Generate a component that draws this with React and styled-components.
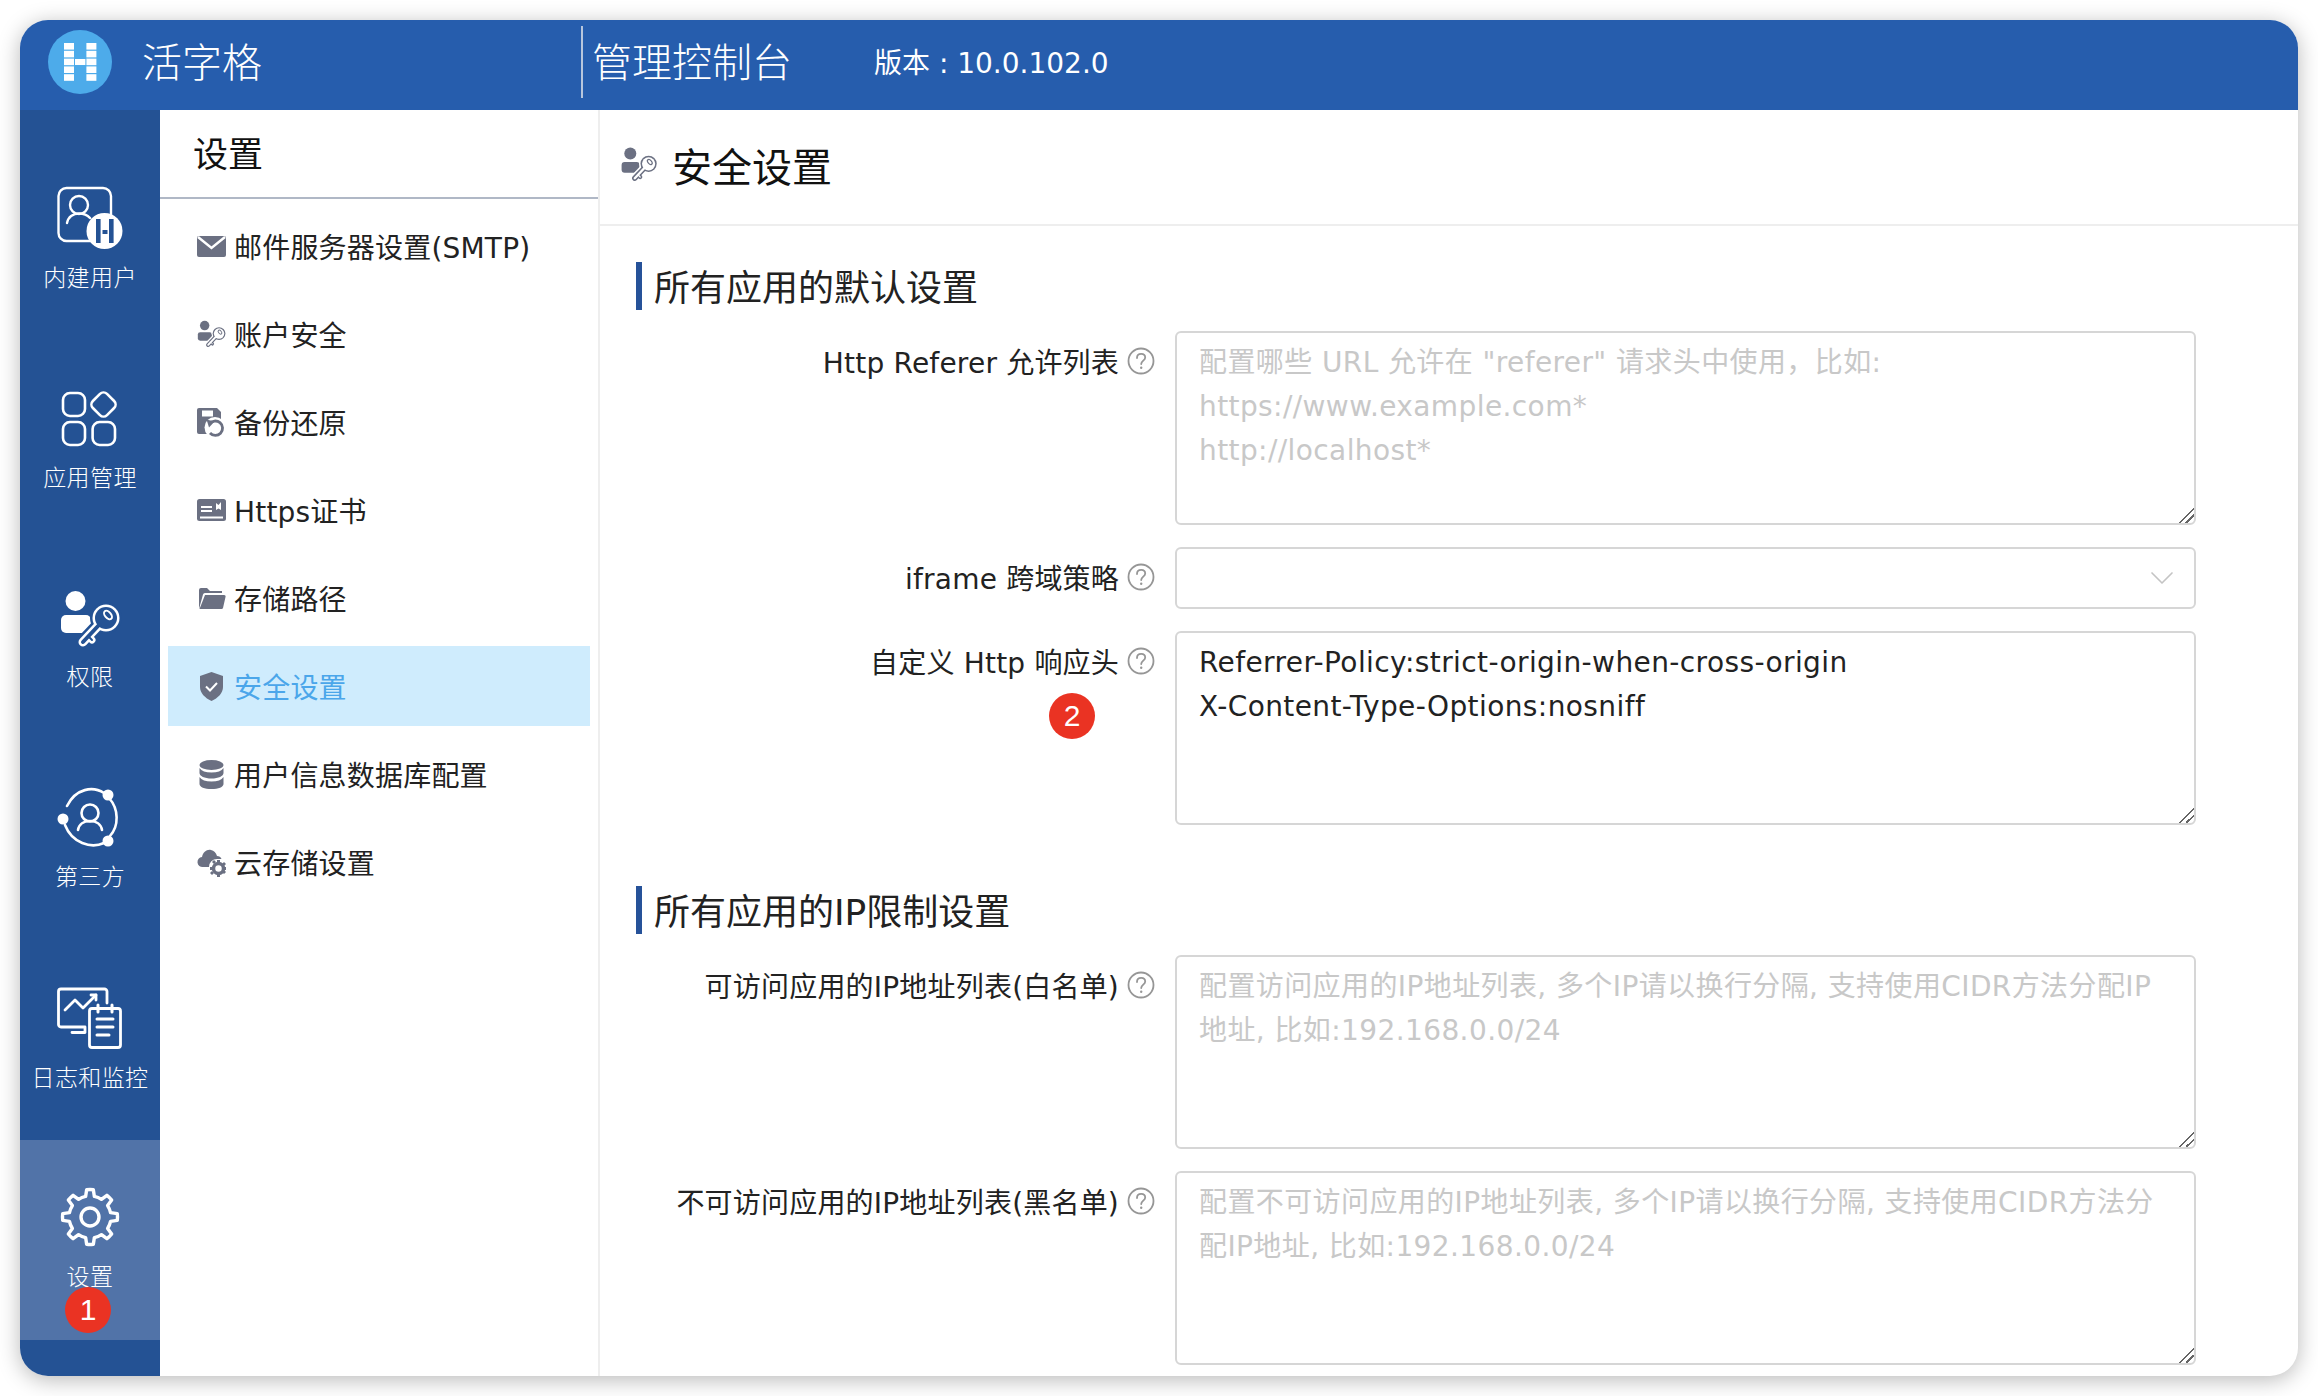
import React from 'react';
import styled, { createGlobalStyle } from 'styled-components';
import { ChevronDown } from 'lucide-react';

const FONT = '"DejaVu Sans", "Noto Sans CJK SC", sans-serif';

const GlobalStyle = createGlobalStyle`
  * { box-sizing: border-box; }
  html, body { margin: 0; padding: 0; background: #fff; }
  body {
    width: 2318px;
    height: 1396px;
    overflow: hidden;
    font-family: ${FONT};
  }
`;

const Page = styled.div`
  width: 2318px;
  height: 1396px;
  padding: 20px;
`;
const Frame = styled.div`
  height: 1356px;
  border-radius: 28px;
  overflow: hidden;
  background: #fff;
  box-shadow: 0 4px 22px rgba(0, 0, 0, .28);
  display: flex;
  flex-direction: column;
`;
const TopBar = styled.header`
  flex: 0 0 90px;
  background: #265dad;
  color: #fff;
  display: flex;
  align-items: center;
  padding: 0 0 6px 28px;
`;
const AppName = styled.div`
  font-size: 40px;
  margin-left: 30px;
  padding-bottom: 4px;
  width: 439px;
  font-weight: 300;
`;
const TopDivider = styled.div`
  width: 2px;
  height: 72px;
  background: #b7c6dd;
`;
const ConsoleName = styled.div`
  font-size: 40px;
  margin-left: 9px;
  padding-bottom: 4px;
  font-weight: 300;
`;
const Version = styled.div`
  font-size: 28px;
  margin-left: 82px;
  padding-bottom: 2px;
`;
const Body = styled.div`
  flex: 1;
  display: flex;
  min-height: 0;
`;
const Rail = styled.nav`
  flex: 0 0 140px;
  background: #245294;
  padding-top: 30px;
`;
const RailItem = styled.div`
  position: relative;
  height: 200px;
  background: ${(p) => (p.$active ? '#5173a8' : 'transparent')};
  color: #fff;
  display: flex;
  flex-direction: column;
  align-items: center;
  padding-top: ${(p) => p.$top}px;
`;
const RailLabel = styled.div`
  font-size: 23px;
  line-height: 30px;
  margin-top: ${(p) => p.$gap}px;
  white-space: nowrap;
  font-weight: 300;
  letter-spacing: .4px;
`;
const Badge = styled.div`
  position: absolute;
  width: 46px;
  height: 46px;
  border-radius: 50%;
  background: #ea3323;
  color: #fff;
  font: 30px "Liberation Sans", sans-serif;
  display: flex;
  align-items: center;
  justify-content: center;
  left: ${(p) => p.$left}px;
  top: ${(p) => p.$top}px;
`;
const Side = styled.aside`
  flex: 0 0 440px;
  border-right: 2px solid #eeeeee;
`;
const SideTitle = styled.div`
  height: 89px;
  border-bottom: 2px solid #b0b8c6;
  padding: 0 0 4px 33px;
  display: flex;
  align-items: center;
  font-size: 35px;
  color: #111;
`;
const SideList = styled.div`
  padding: 7px 8px 0;
  display: flex;
  flex-direction: column;
  gap: 8px;
`;
const SideItem = styled.div`
  height: 80px;
  display: flex;
  align-items: center;
  padding-left: 29px;
  gap: 8px;
  font-size: 28px;
  letter-spacing: .2px;
  color: ${(p) => (p.$active ? '#4ba6ea' : '#222')};
  background: ${(p) => (p.$active ? '#cfecfd' : 'transparent')};
  svg { flex: 0 0 auto; color: #6b7082; }
`;
const Main = styled.main`
  flex: 1;
  min-width: 0;
`;
const MainHead = styled.div`
  height: 116px;
  border-bottom: 2px solid #eeeeee;
  display: flex;
  align-items: center;
  padding: 0 0 4px 18px;
  gap: 12px;
  font-size: 40px;
  color: #111;
`;
const Content = styled.div`
  padding: 36px 102px 0 36px;
`;
const SectionTitle = styled.h2`
  margin: ${(p) => p.$top}px 0 21px;
  height: 48px;
  border-left: 6px solid #265299;
  padding: 0 0 2px 12px;
  display: flex;
  align-items: center;
  font-size: 36px;
  font-weight: 400;
  color: #222;
`;
const Row = styled.div`
  display: grid;
  grid-template-columns: 519px 1fr;
  column-gap: 20px;
  margin-bottom: 22px;
  position: relative;
`;
const Label = styled.div`
  display: flex;
  justify-content: flex-end;
  align-items: center;
  height: 44px;
  margin-top: 8px;
  gap: 8px;
  font-size: 28px;
  letter-spacing: .2px;
  color: #222;
  white-space: nowrap;
  svg { flex: 0 0 28px; }
`;
const Area = styled.textarea`
  display: block;
  width: 100%;
  height: 194px;
  border: 2px solid #d6d6d6;
  border-radius: 6px;
  padding: 8px 22px;
  font: 28px/44px ${FONT};
  letter-spacing: .4px;
  color: #222;
  background: #fff;
  outline: none;
  overflow: hidden;
  resize: vertical;
  white-space: pre;
  &::placeholder { color: #c8c8c8; opacity: 1; }
  &::-webkit-resizer {
    background: linear-gradient(135deg, transparent 0 47%, #666 47% 55%, transparent 55% 70%, #666 70% 78%, transparent 78%);
  }
`;
const Select = styled.div`
  height: 62px;
  border: 2px solid #d6d6d6;
  border-radius: 6px;
  display: flex;
  align-items: center;
  justify-content: flex-end;
  padding-right: 12px;
  color: #c4c4c4;
`;
const SideKey = styled(KeyPersonIcon)`
  margin: 0 -2px;
`;

function HelpIcon() {
  return (
    <svg width="28" height="28" viewBox="0 0 28 28" fill="none">
      <circle cx="14" cy="14" r="12.500" stroke="#969696" strokeWidth="1.800" />
      <path d="M10 11c0-2.500 1.800-4.200 4.200-4.200s4 1.600 4 3.700c0 3-4 3.300-4 6.500" stroke="#969696" strokeWidth="1.800" strokeLinecap="round" />
      <circle cx="14.200" cy="20.800" r="1.200" fill="#969696" />
    </svg>
  );
}

function Logo() {
  const rows = [13, 20.8, 28.6, 36.4, 44.2];
  return (
    <svg width="64" height="64" viewBox="0 0 64 64">
      <circle cx="32" cy="32" r="32" fill="#4dabea" />
      {rows.map((y) => (
        <g key={y} fill="#fff">
          <rect x="16" y={y} width="10" height="6.6" />
          <rect x="38.4" y={y} width="10" height="6.6" />
        </g>
      ))}
      <rect x="27" y="29" width="10.4" height="6" fill="#fff" />
    </svg>
  );
}

function UserBadgeIcon() {
  return (
    <svg width="70" height="70" viewBox="0 0 70 70" fill="none" stroke="#fff" strokeWidth="2.400">
      <rect x="3.500" y="6" width="52.500" height="53" rx="8" />
      <circle cx="24" cy="23" r="9" />
      <path d="M12 41c1-6 6-9.500 12-9.500 4 0 8 1.200 11 4.500" strokeLinecap="round" />
      <circle cx="49.500" cy="49" r="18" fill="#fff" stroke="none" />
      <g fill="#245294" stroke="none">
        <rect x="41" y="37" width="4.600" height="24" />
        <rect x="54" y="37" width="4.600" height="24" />
        <rect x="47.500" y="48" width="5" height="4" />
      </g>
    </svg>
  );
}

function AppsIcon() {
  return (
    <svg width="70" height="70" viewBox="0 0 70 70" fill="none" stroke="#fff" strokeWidth="2.600">
      <rect x="8" y="8" width="22" height="23" rx="7" />
      <rect x="38.500" y="9.500" width="20" height="20" rx="5" transform="rotate(45 48.500 19.500)" />
      <rect x="8" y="37" width="22" height="23" rx="7" />
      <rect x="37.600" y="37" width="22.400" height="23" rx="7" />
    </svg>
  );
}

// the key is stroked three times: gap, outline, then the hollow inside
function KeyPersonIcon({ size = 70, color = '#fff', fill = '#245294', className }) {
  const layers = [[fill, 5], [color, 2.500], [fill, 0]];
  return (
    <svg className={className} width={size} height={size} viewBox="0 0 70 70" fill="none" strokeLinecap="round">
      <circle cx="20.500" cy="16" r="10" fill={color} />
      <rect x="6" y="30" width="30" height="18" rx="5" fill={color} />
      {layers.map(([c, extra]) => (
        <g key={`${c}${extra}`} stroke={c} fill={c}>
          <circle cx="51" cy="33" r={11 + extra} strokeWidth="0" />
          <path d="M44 40L28 57" strokeWidth={4 + extra * 2} />
          <path d="M33 51l4 4" strokeWidth={2 + extra * 2} />
        </g>
      ))}
      <ellipse cx="53" cy="30" rx="3" ry="5" transform="rotate(-40 53 30)" stroke={color} strokeWidth="2" />
    </svg>
  );
}

function ThirdPartyIcon() {
  return (
    <svg width="70" height="70" viewBox="0 0 70 70" fill="none" stroke="#fff" strokeWidth="2.600" strokeLinecap="round">
      <path d="M49 11C38 4 21 6 12 24" />
      <path d="M54 16c10 11 10 28 1 38" />
      <path d="M49 61C36 67 17 61 10 43" />
      <g fill="#fff" stroke="none">
        <circle cx="53" cy="13" r="5.500" />
        <circle cx="8" cy="37" r="5.500" />
        <circle cx="53" cy="59" r="5.500" />
      </g>
      <circle cx="35" cy="31" r="8.500" />
      <path d="M23 48c1-6 6-9 12-9s11 3 12 9" />
    </svg>
  );
}

function LogsIcon() {
  return (
    <svg width="70" height="70" viewBox="0 0 70 70" fill="none" stroke="#fff" strokeWidth="2.800" strokeLinecap="round" strokeLinejoin="round">
      <path d="M52 18V6.500a2.500 2.500 0 0 0-2.500-2.500H6a2.500 2.500 0 0 0-2.500 2.500v33A2.500 2.500 0 0 0 6 42h24v5.500H17" />
      <path d="M10 25l10-10 8 8 13-13" />
      <path d="M41 10h-5M41 10v5" />
      <rect x="34.500" y="23.500" width="31" height="39" rx="2.500" />
      <path d="M43 20v7M57 20v7M42 34h16M42 42h16M42 50h12" strokeWidth="3" />
    </svg>
  );
}

const gearPath = (() => {
  const c = 35;
  const inner = 21;
  const outer = 27.500;
  const pt = (r, deg) => {
    const a = (deg * Math.PI) / 180;
    return `${(c + r * Math.cos(a)).toFixed(2)} ${(c + r * Math.sin(a)).toFixed(2)}`;
  };
  let d = '';
  for (let i = 0; i < 8; i += 1) {
    const a = i * 45 - 90;
    d += `${i === 0 ? 'M' : `A${inner} ${inner} 0 0 1 `}${pt(inner, a - 12)}`;
    d += `L${pt(outer, a - 7)}A${outer} ${outer} 0 0 1 ${pt(outer, a + 7)}L${pt(inner, a + 12)}`;
  }
  return `${d}A${inner} ${inner} 0 0 1 ${pt(inner, -102)}Z`;
})();

function GearIcon() {
  return (
    <svg width="70" height="70" viewBox="0 0 70 70" fill="none" stroke="#fff" strokeWidth="3.400" strokeLinejoin="round">
      <path d={gearPath} />
      <circle cx="35" cy="35" r="9" />
    </svg>
  );
}

function MailIcon() {
  return (
    <svg width="29" height="29" viewBox="0 0 29 29">
      <rect y="4" width="29" height="21" rx="2" fill="currentColor" />
      <path d="M1 5l13.500 11L28 5" fill="none" stroke="#fff" strokeWidth="2.400" />
    </svg>
  );
}

function BackupIcon() {
  return (
    <svg width="29" height="29" viewBox="0 0 29 29" fill="currentColor">
      <path d="M2 0h18l4 4v20a2 2 0 0 1-2 2H2a2 2 0 0 1-2-2V2a2 2 0 0 1 2-2z" />
      <rect x="5" y="2.500" width="11" height="6" fill="#fff" />
      <circle cx="18" cy="19.500" r="10.500" fill="#fff" />
      <path d="M12.500 16a7.200 7.200 0 1 1 .5 9" fill="none" stroke="currentColor" strokeWidth="2.800" />
      <path d="M9.500 11.500l8 2-5.500 6z" />
    </svg>
  );
}

function CertIcon() {
  return (
    <svg width="29" height="29" viewBox="0 0 29 29">
      <rect y="3" width="29" height="22" rx="2.500" fill="currentColor" />
      <path d="M4 11h11M4 15h11M3 21.500h23" stroke="#fff" strokeWidth="2" />
      <path d="M19 7l2.500 2L24 6v8l-2.500-1.500L19 14z" fill="#fff" />
    </svg>
  );
}

function FolderIcon() {
  return (
    <svg width="29" height="29" viewBox="0 0 29 29" fill="currentColor">
      <path d="M2 25V6a2 2 0 0 1 2-2h6l3 3h12v2H8a2 2 0 0 0-2 1.500z" />
      <path d="M8 11h19a1.500 1.500 0 0 1 1.500 2L26 24a1.500 1.500 0 0 1-1.500 1H2.500z" />
    </svg>
  );
}

function ShieldIcon() {
  return (
    <svg width="29" height="29" viewBox="0 0 29 29">
      <path d="M14.500 0L26 4v11c0 6-5 11-11.500 14C8 26 3 21 3 15V4z" fill="currentColor" />
      <path d="M9 14.500l4 4 7-7.500" fill="none" stroke="#fff" strokeWidth="2" />
    </svg>
  );
}

function DbIcon() {
  return (
    <svg width="29" height="29" viewBox="0 0 29 29" fill="currentColor">
      <ellipse cx="14.500" cy="5" rx="12" ry="5" />
      <path d="M2.500 8c2 3 6 4.500 12 4.500S24.500 11 26.500 8v5c0 3-5 5.500-12 5.500S2.500 16 2.500 13z" />
      <path d="M2.500 17c2 3 6 4.500 12 4.500s10-1.500 12-4.500v7c0 3-5 5-12 5s-12-2-12-5z" />
    </svg>
  );
}

function CloudGearIcon() {
  return (
    <svg width="29" height="29" viewBox="0 0 29 29" fill="currentColor">
      <path d="M6 19a5 5 0 0 1-1-10c1-5 5-8 9-7 3 .5 5 3 6 6 2 0 4 1 4.500 3H20a8 8 0 0 0-8 8z" />
      <circle cx="21.500" cy="20.500" r="5" fill="none" stroke="currentColor" strokeWidth="3.500" />
      <path d="M20 12h3v3h-3zM20 26h3v3h-3zM13 19h3v3h-3zM27 19h2v3h-2zM15 14l2-2 2 2-2 2zM25 24l2-2 2 2-2 2zM15 27l-2-2 2-2 2 2zM27 14l2 2-2 2-2-2z" />
    </svg>
  );
}

const railItems = [
  { label: '内建用户', icon: <UserBadgeIcon />, top: 42, gap: 11 },
  { label: '应用管理', icon: <AppsIcon />, top: 45, gap: 8 },
  { label: '权限', icon: <KeyPersonIcon />, top: 45, gap: 7 },
  { label: '第三方', icon: <ThirdPartyIcon />, top: 42, gap: 10 },
  { label: '日志和监控', icon: <LogsIcon />, top: 45, gap: 8 },
  { label: '设置', icon: <GearIcon />, top: 42, gap: 10, active: true, badge: '1' },
];

const sideItems = [
  { label: '邮件服务器设置(SMTP)', icon: <MailIcon /> },
  { label: '账户安全', icon: <SideKey size={33} color="#6b7082" fill="#fff" /> },
  { label: '备份还原', icon: <BackupIcon /> },
  { label: 'Https证书', icon: <CertIcon /> },
  { label: '存储路径', icon: <FolderIcon /> },
  { label: '安全设置', icon: <ShieldIcon />, active: true },
  { label: '用户信息数据库配置', icon: <DbIcon /> },
  { label: '云存储设置', icon: <CloudGearIcon /> },
];

export default function App() {
  return (
    <Page>
      <GlobalStyle />
      <Frame>
        <TopBar>
          <Logo />
          <AppName>活字格</AppName>
          <TopDivider />
          <ConsoleName>管理控制台</ConsoleName>
          <Version>版本 : 10.0.102.0</Version>
        </TopBar>
        <Body>
          <Rail>
            {railItems.map((item) => (
              <RailItem key={item.label} $active={item.active} $top={item.top}>
                {item.icon}
                <RailLabel $gap={item.gap}>{item.label}</RailLabel>
                {item.badge && <Badge $left={45} $top={147}>{item.badge}</Badge>}
              </RailItem>
            ))}
          </Rail>
          <Side>
            <SideTitle>设置</SideTitle>
            <SideList>
              {sideItems.map((item) => (
                <SideItem key={item.label} $active={item.active}>
                  {item.icon}
                  <span>{item.label}</span>
                </SideItem>
              ))}
            </SideList>
          </Side>
          <Main>
            <MainHead>
              <KeyPersonIcon size={42} color="#6b7082" fill="#fff" />
              安全设置
            </MainHead>
            <Content>
              <SectionTitle $top={0}>所有应用的默认设置</SectionTitle>
              <Row>
                <Label>Http Referer 允许列表<HelpIcon /></Label>
                <Area readOnly placeholder={'配置哪些 URL 允许在 "referer" 请求头中使用，比如:\nhttps://www.example.com*\nhttp://localhost*'} />
              </Row>
              <Row>
                <Label>iframe 跨域策略<HelpIcon /></Label>
                <Select><ChevronDown size={40} strokeWidth={1} /></Select>
              </Row>
              <Row>
                <Label>自定义 Http 响应头<HelpIcon /></Label>
                <Area readOnly defaultValue={'Referrer-Policy:strict-origin-when-cross-origin\nX-Content-Type-Options:nosniff'} />
                <Badge $left={413} $top={62}>2</Badge>
              </Row>
              <SectionTitle $top={61}>所有应用的IP限制设置</SectionTitle>
              <Row>
                <Label>可访问应用的IP地址列表(白名单)<HelpIcon /></Label>
                <Area readOnly placeholder={'配置访问应用的IP地址列表, 多个IP请以换行分隔, 支持使用CIDR方法分配IP\n地址, 比如:192.168.0.0/24'} />
              </Row>
              <Row>
                <Label>不可访问应用的IP地址列表(黑名单)<HelpIcon /></Label>
                <Area readOnly placeholder={'配置不可访问应用的IP地址列表, 多个IP请以换行分隔, 支持使用CIDR方法分\n配IP地址, 比如:192.168.0.0/24'} />
              </Row>
            </Content>
          </Main>
        </Body>
      </Frame>
    </Page>
  );
}
